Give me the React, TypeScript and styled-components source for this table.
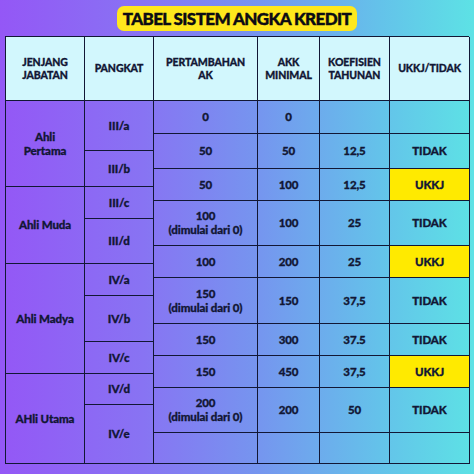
import React from "react";
import styled, { createGlobalStyle } from "styled-components";

const ink = "#121735";
const headerBg = "#d2f7fd";
const ukkjBg = "#ffea00";

const GlobalStyle = createGlobalStyle`
  html, body {
    margin: 0;
    padding: 0;
  }
  body {
    font-family: Lato, "Open Sans", sans-serif;
  }
  * {
    box-sizing: border-box;
  }
`;

const Page = styled.div`
  width: 474px;
  height: 474px;
  display: flex;
  flex-direction: column;
  align-items: center;
  padding-top: 6px;
  gap: 5px;
  background: linear-gradient(90deg, #9457f6 0%, #8873f3 30%, #7596ef 55%, #64c2ea 80%, #5de2e5 100%);
  overflow: hidden;
`;

const Title = styled.div`
  height: 25px;
  padding: 0 6px;
  display: flex;
  align-items: center;
  background: #ffe81c;
  border-radius: 7px;
  color: #0c0c14;
  font-weight: 900;
  font-size: 17px;
  letter-spacing: -0.6px;
  -webkit-text-stroke: 0.4px #0c0c14;
`;

// Table grid: six columns, header + 18 thin tracks so that spanned rows line up
const Table = styled.div`
  width: 464px;
  display: grid;
  grid-template-columns: 79px 69px 104px 62px 70px 80px;
  grid-template-rows: 64px 33px 17px 18px 18px 14px 18px 27px 18px 14px 18px 28px 18px 14px 18px 14px 17px 28px 31px;
  border-top: 1.5px solid ${ink};
  border-left: 1.5px solid ${ink};
`;

const Cell = styled.div<{ $row: string; $col: number; $bg?: string; $header?: boolean }>`
  grid-row: ${(p) => p.$row};
  grid-column: ${(p) => p.$col};
  display: flex;
  align-items: center;
  justify-content: center;
  text-align: center;
  border-right: 1.5px solid ${ink};
  border-bottom: 1.5px solid ${ink};
  background: ${(p) => (p.$header ? headerBg : p.$bg || "transparent")};
  color: ${ink};
  font-weight: 900;
  font-size: ${(p) => (p.$header ? "10.5px" : "11.5px")};
  line-height: ${(p) => (p.$header ? "13px" : "14px")};
  letter-spacing: -0.1px;
  -webkit-text-stroke: 0.3px ${ink};
`;

const headers: React.ReactNode[] = [
  <>JENJANG<br />JABATAN</>,
  "PANGKAT",
  <>PERTAMBAHAN<br />AK</>,
  <>AKK<br />MINIMAL</>,
  <>KOEFISIEN<br />TAHUNAN</>,
  "UKKJ/TIDAK",
];

const jenjang = [
  { row: "2 / 6", label: <>Ahli<br />Pertama</> },
  { row: "6 / 10", label: "Ahli Muda" },
  { row: "10 / 16", label: "Ahli Madya" },
  { row: "16 / 20", label: "AHli Utama" },
];

const pangkat = [
  { row: "2 / 4", label: "III/a" },
  { row: "4 / 6", label: "III/b" },
  { row: "6 / 8", label: "III/c" },
  { row: "8 / 10", label: "III/d" },
  { row: "10 / 12", label: "IV/a" },
  { row: "12 / 14", label: "IV/b" },
  { row: "14 / 16", label: "IV/c" },
  { row: "16 / 18", label: "IV/d" },
  { row: "18 / 20", label: "IV/e" },
];

const dimulai = (n: string) => (
  <>
    {n}
    <br />
    (dimulai dari 0)
  </>
);

const rows: { row: string; ak: React.ReactNode; akk: string; koef: string; status: string }[] = [
  { row: "2 / 3", ak: "0", akk: "0", koef: "", status: "" },
  { row: "3 / 5", ak: "50", akk: "50", koef: "12,5", status: "TIDAK" },
  { row: "5 / 7", ak: "50", akk: "100", koef: "12,5", status: "UKKJ" },
  { row: "7 / 9", ak: dimulai("100"), akk: "100", koef: "25", status: "TIDAK" },
  { row: "9 / 11", ak: "100", akk: "200", koef: "25", status: "UKKJ" },
  { row: "11 / 13", ak: dimulai("150"), akk: "150", koef: "37,5", status: "TIDAK" },
  { row: "13 / 15", ak: "150", akk: "300", koef: "37.5", status: "TIDAK" },
  { row: "15 / 17", ak: "150", akk: "450", koef: "37,5", status: "UKKJ" },
  { row: "17 / 19", ak: dimulai("200"), akk: "200", koef: "50", status: "TIDAK" },
  { row: "19 / 20", ak: "", akk: "", koef: "", status: "" },
];

export default function App() {
  return (
    <>
      <GlobalStyle />
      <Page>
        <Title>TABEL SISTEM ANGKA KREDIT</Title>
        <Table>
          {headers.map((h, i) => (
            <Cell key={`h${i}`} $row="1 / 2" $col={i + 1} $header>
              {h}
            </Cell>
          ))}
          {jenjang.map((j) => (
            <Cell key={j.row} $row={j.row} $col={1}>
              {j.label}
            </Cell>
          ))}
          {pangkat.map((p) => (
            <Cell key={p.label} $row={p.row} $col={2}>
              {p.label}
            </Cell>
          ))}
          {rows.map((r) => (
            <React.Fragment key={r.row}>
              <Cell $row={r.row} $col={3}>{r.ak}</Cell>
              <Cell $row={r.row} $col={4}>{r.akk}</Cell>
              <Cell $row={r.row} $col={5}>{r.koef}</Cell>
              <Cell $row={r.row} $col={6} $bg={r.status === "UKKJ" ? ukkjBg : undefined}>
                {r.status}
              </Cell>
            </React.Fragment>
          ))}
        </Table>
      </Page>
    </>
  );
}
